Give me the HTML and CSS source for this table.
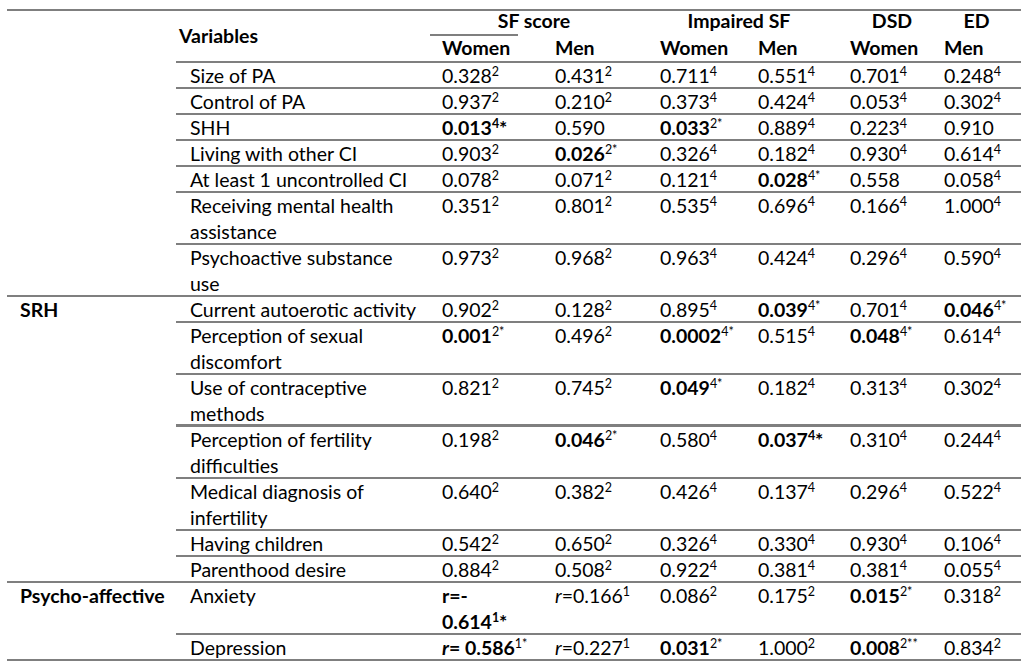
FILE: index.html
```html
<!DOCTYPE html>
<html lang="en">
<head>
<meta charset="utf-8">
<title>Table</title>
<link rel="stylesheet" href="styles.css">
</head>
<body>
<table class="tbl">
  <colgroup>
    <col class="c-grp"><col class="c-var"><col class="c-d1"><col class="c-d2"><col class="c-d3"><col class="c-d4"><col class="c-d5"><col class="c-d6">
  </colgroup>
  <thead>
    <tr class="h1">
      <td rowspan="2" class="top"></td>
      <td rowspan="2" class="top bot var-h"><b>Variables</b></td>
      <td colspan="2" class="top sf-h"><b>SF score</b></td>
      <td colspan="2" class="top imp-h"><b>Impaired SF</b></td>
      <td class="top ctr dsd-h"><b>DSD</b></td>
      <td class="top ctr"><b>ED</b></td>
    </tr>
    <tr class="h2">
      <td class="bot d"><b>Women</b></td>
      <td class="bot d"><b>Men</b></td>
      <td class="bot d"><b>Women</b></td>
      <td class="bot d"><b>Men</b></td>
      <td class="bot d"><b>Women</b></td>
      <td class="bot d"><b>Men</b></td>
    </tr>
  </thead>
  <tbody>
    <tr>
      <td rowspan="7" class="bot grp"></td>
      <td class="bot v">Size of PA</td>
      <td class="bot d">0.328<sup>2</sup></td><td class="bot d">0.431<sup>2</sup></td><td class="bot d">0.711<sup>4</sup></td><td class="bot d">0.551<sup>4</sup></td><td class="bot d">0.701<sup>4</sup></td><td class="bot d">0.248<sup>4</sup></td>
    </tr>
    <tr>
      <td class="bot v">Control of PA</td>
      <td class="bot d">0.937<sup>2</sup></td><td class="bot d">0.210<sup>2</sup></td><td class="bot d">0.373<sup>4</sup></td><td class="bot d">0.424<sup>4</sup></td><td class="bot d">0.053<sup>4</sup></td><td class="bot d">0.302<sup>4</sup></td>
    </tr>
    <tr>
      <td class="bot v">SHH</td>
      <td class="bot d"><b>0.013<sup>4</sup>*</b></td><td class="bot d">0.590</td><td class="bot d"><b>0.033</b><sup>2*</sup></td><td class="bot d">0.889<sup>4</sup></td><td class="bot d">0.223<sup>4</sup></td><td class="bot d">0.910</td>
    </tr>
    <tr>
      <td class="bot v">Living with other CI</td>
      <td class="bot d">0.903<sup>2</sup></td><td class="bot d"><b>0.026</b><sup>2*</sup></td><td class="bot d">0.326<sup>4</sup></td><td class="bot d">0.182<sup>4</sup></td><td class="bot d">0.930<sup>4</sup></td><td class="bot d">0.614<sup>4</sup></td>
    </tr>
    <tr>
      <td class="bot v">At least 1 uncontrolled CI</td>
      <td class="bot d">0.078<sup>2</sup></td><td class="bot d">0.071<sup>2</sup></td><td class="bot d">0.121<sup>4</sup></td><td class="bot d"><b>0.028</b><sup>4*</sup></td><td class="bot d">0.558</td><td class="bot d">0.058<sup>4</sup></td>
    </tr>
    <tr>
      <td class="bot v">Receiving mental health<br>assistance</td>
      <td class="bot d">0.351<sup>2</sup></td><td class="bot d">0.801<sup>2</sup></td><td class="bot d">0.535<sup>4</sup></td><td class="bot d">0.696<sup>4</sup></td><td class="bot d">0.166<sup>4</sup></td><td class="bot d">1.000<sup>4</sup></td>
    </tr>
    <tr>
      <td class="bot v">Psychoactive substance<br>use</td>
      <td class="bot d">0.973<sup>2</sup></td><td class="bot d">0.968<sup>2</sup></td><td class="bot d">0.963<sup>4</sup></td><td class="bot d">0.424<sup>4</sup></td><td class="bot d">0.296<sup>4</sup></td><td class="bot d">0.590<sup>4</sup></td>
    </tr>

    <tr>
      <td rowspan="7" class="bot grp"><b>SRH</b></td>
      <td class="bot v">Current autoerotic activity</td>
      <td class="bot d">0.902<sup>2</sup></td><td class="bot d">0.128<sup>2</sup></td><td class="bot d">0.895<sup>4</sup></td><td class="bot d"><b>0.039</b><sup>4*</sup></td><td class="bot d">0.701<sup>4</sup></td><td class="bot d"><b>0.046</b><sup>4*</sup></td>
    </tr>
    <tr>
      <td class="bot v">Perception of sexual<br>discomfort</td>
      <td class="bot d"><b>0.001</b><sup>2*</sup></td><td class="bot d">0.496<sup>2</sup></td><td class="bot d"><b>0.0002</b><sup>4*</sup></td><td class="bot d">0.515<sup>4</sup></td><td class="bot d"><b>0.048</b><sup>4*</sup></td><td class="bot d">0.614<sup>4</sup></td>
    </tr>
    <tr class="thick">
      <td class="bot v">Use of contraceptive<br>methods</td>
      <td class="bot d">0.821<sup>2</sup></td><td class="bot d">0.745<sup>2</sup></td><td class="bot d"><b>0.049</b><sup>4*</sup></td><td class="bot d">0.182<sup>4</sup></td><td class="bot d">0.313<sup>4</sup></td><td class="bot d">0.302<sup>4</sup></td>
    </tr>
    <tr>
      <td class="bot v">Perception of fertility<br>difficulties</td>
      <td class="bot d">0.198<sup>2</sup></td><td class="bot d"><b>0.046</b><sup>2*</sup></td><td class="bot d">0.580<sup>4</sup></td><td class="bot d"><b>0.037<sup>4</sup>*</b></td><td class="bot d">0.310<sup>4</sup></td><td class="bot d">0.244<sup>4</sup></td>
    </tr>
    <tr>
      <td class="bot v">Medical diagnosis of<br>infertility</td>
      <td class="bot d">0.640<sup>2</sup></td><td class="bot d">0.382<sup>2</sup></td><td class="bot d">0.426<sup>4</sup></td><td class="bot d">0.137<sup>4</sup></td><td class="bot d">0.296<sup>4</sup></td><td class="bot d">0.522<sup>4</sup></td>
    </tr>
    <tr>
      <td class="bot v">Having children</td>
      <td class="bot d">0.542<sup>2</sup></td><td class="bot d">0.650<sup>2</sup></td><td class="bot d">0.326<sup>4</sup></td><td class="bot d">0.330<sup>4</sup></td><td class="bot d">0.930<sup>4</sup></td><td class="bot d">0.106<sup>4</sup></td>
    </tr>
    <tr>
      <td class="bot v">Parenthood desire</td>
      <td class="bot d">0.884<sup>2</sup></td><td class="bot d">0.508<sup>2</sup></td><td class="bot d">0.922<sup>4</sup></td><td class="bot d">0.381<sup>4</sup></td><td class="bot d">0.381<sup>4</sup></td><td class="bot d">0.055<sup>4</sup></td>
    </tr>

    <tr>
      <td rowspan="2" class="bot grp"><b>Psycho-affective</b></td>
      <td class="bot v">Anxiety</td>
      <td class="bot d"><b>r=-<br>0.614<sup>1</sup>*</b></td><td class="bot d"><i>r</i>=0.166<sup>1</sup></td><td class="bot d">0.086<sup>2</sup></td><td class="bot d">0.175<sup>2</sup></td><td class="bot d"><b>0.015</b><sup>2*</sup></td><td class="bot d">0.318<sup>2</sup></td>
    </tr>
    <tr>
      <td class="bot v">Depression</td>
      <td class="bot d"><b><i>r</i>= 0.586</b><sup>1*</sup></td><td class="bot d"><i>r</i>=0.227<sup>1</sup></td><td class="bot d"><b>0.031</b><sup>2*</sup></td><td class="bot d">1.000<sup>2</sup></td><td class="bot d"><b>0.008</b><sup>2**</sup></td><td class="bot d">0.834<sup>2</sup></td>
    </tr>
  </tbody>
</table>
</body>
</html>
```

FILE: styles.css
```css
html, body {
  margin: 0;
  padding: 0;
  background: #ffffff;
}

body {
  font-family: Lato, "Liberation Sans", sans-serif;
  font-size: 19.5px;
  color: #000000;
}

.tbl {
  border-collapse: separate;
  border-spacing: 0;
  table-layout: fixed;
  width: 1014px;
  margin: 9px 0 0 7px;
}

.c-grp { width: 169px; }
.c-var { width: 254px; }
.c-d1 { width: 113px; }
.c-d2 { width: 105px; }
.c-d3 { width: 98px; }
.c-d4 { width: 92px; }
.c-d5 { width: 94px; }
.c-d6 { width: 89px; }

.tbl td {
  padding: 0;
  vertical-align: top;
  line-height: 26px;
  white-space: nowrap;
}

.tbl b { font-weight: 700; }

.h1 td,
.h2 td {
  height: 27px;
  line-height: 24px;
}

tbody tr { height: 26px; }

.top { box-shadow: inset 0 2px 0 #7f7f7f; }
.bot { box-shadow: inset 0 -2px 0 #7f7f7f; }
.top.bot { box-shadow: inset 0 2px 0 #7f7f7f, inset 0 -2px 0 #7f7f7f; }
.thick .bot { box-shadow: inset 0 -3px 0 #7f7f7f; }

.tbl .var-h {
  vertical-align: middle;
  padding-left: 3px;
}

.tbl .sf-h {
  text-align: center;
  padding-right: 10px;
  background: linear-gradient(#7f7f7f, #7f7f7f) left bottom / 88px 2px no-repeat;
}

.tbl .imp-h {
  text-align: center;
  padding-right: 8px;
}

.ctr { text-align: center; }
.tbl .dsd-h { padding-left: 14px; }

.tbl .grp { padding-left: 13px; }
.tbl .v { padding-left: 14px; }
.tbl .d { padding-left: 12px; }

sup {
  font-size: 0.64em;
  line-height: 0;
  vertical-align: 0.55em;
}
```
